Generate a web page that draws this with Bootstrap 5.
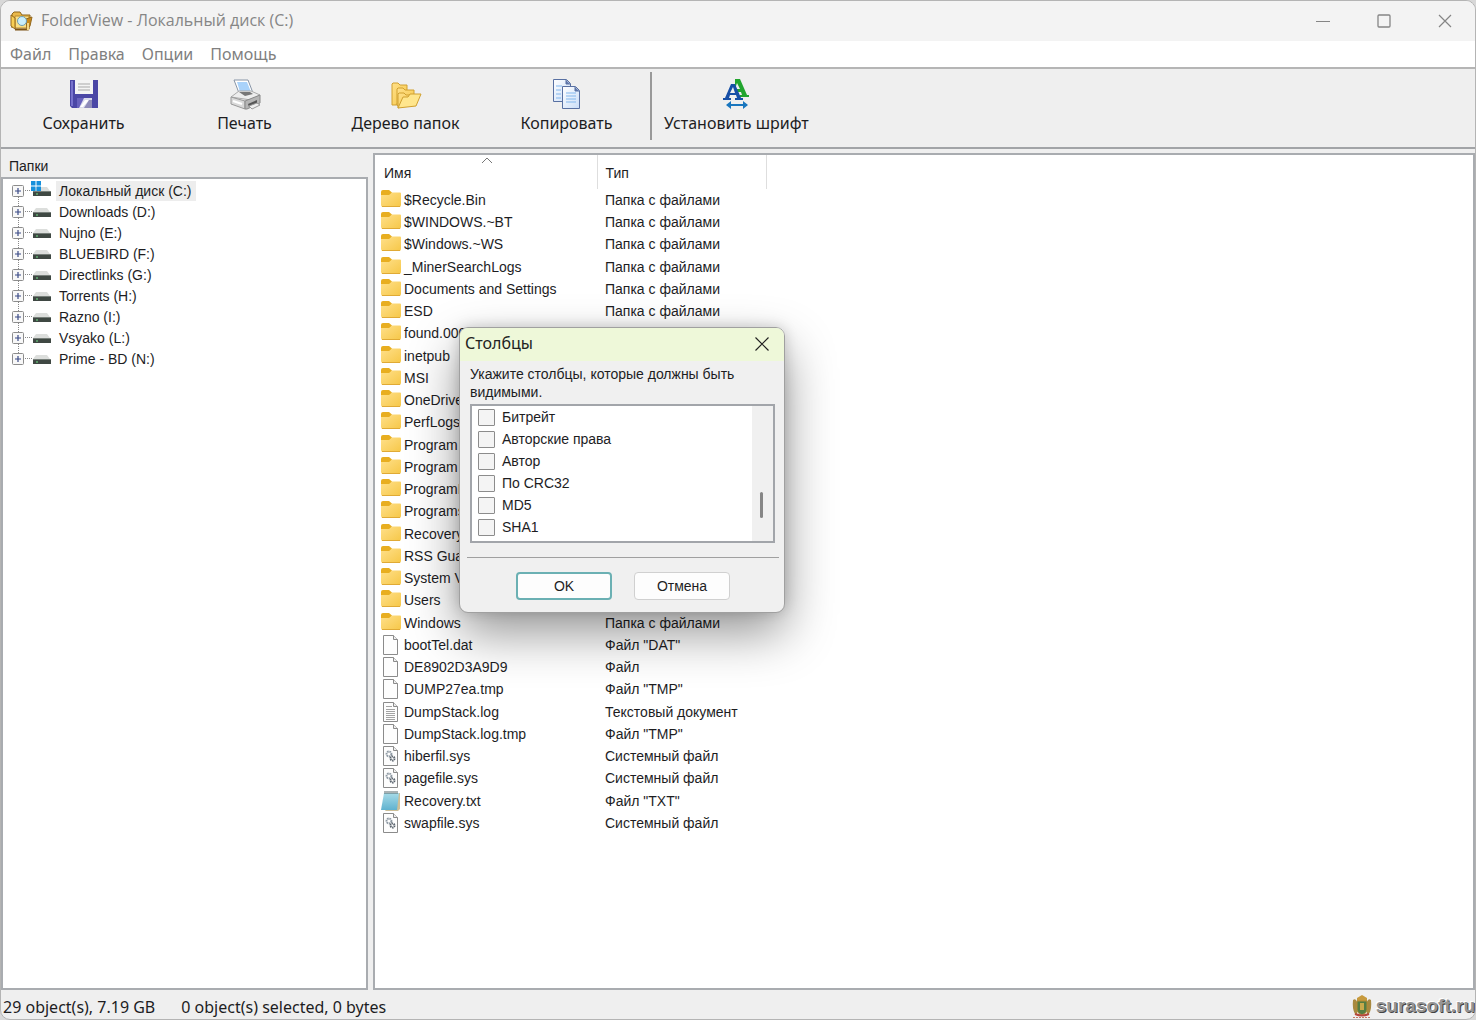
<!DOCTYPE html>
<html lang="ru">
<head>
<meta charset="utf-8">
<meta name="viewport" content="width=device-width, initial-scale=1">
<title>FolderView - Локальный диск (C:)</title>
<link href="https://cdn.jsdelivr.net/npm/bootstrap@5.3.0/dist/css/bootstrap.min.css" rel="stylesheet">
<style>
:root { --face:#efefef; --ui:"Noto Sans","Open Sans",sans-serif; --gdi:"Liberation Sans",sans-serif; }
body { background:#d8d8d8; font-family:var(--ui); color:#1d1d1f; }
button { border:0; background:none; padding:0; color:inherit; }
.app-window { height:100vh; background:var(--face); border:1px solid #b4b4b4; border-radius:10px; }
.title-bar { height:40px; background:#f3f3f3; padding-left:9px; font-size:16px; color:#858585; }
.title-bar h1 { font-family:"Open Sans",sans-serif; font-size:16px; font-weight:400; margin:0; color:#868686; }
.win-btn { width:61px; height:40px; display:flex; align-items:center; justify-content:center; }
.menu-bar { height:28px; background:#fff; border-bottom:2px solid #b5b5b5; padding-left:9px; gap:17px; font-size:16px; line-height:27px; }
.menu-bar a { color:#808080; text-decoration:none; }
.tool-bar { height:80px; border-bottom:2px solid #a2a4a7; padding:3px 2px; }
.tool-btn { width:161px; font-size:16px; line-height:22px; padding-bottom:4px; }
.tool-btn svg { display:block; margin:0 auto 2px; }
.tool-sep { width:2px; height:68px; background:#999; margin-left:3px; }
.tool-wide { width:auto; padding-left:12px; }
.panes { gap:5px; padding-top:4px; font-family:var(--gdi); font-size:14px; }
.left-pane { flex:0 0 25%; max-width:367px; }
.left-pane h2 { font-size:14px; line-height:26px; height:24px; margin:0; padding-left:8px; }
.sunken { background:#fff; border:2px solid #a9acb0; }
.tree { list-style:none; margin:0; padding:1px 0 0 9px; }
.tree li { height:21px; display:flex; align-items:center; position:relative; }
.tree li + li::before { content:""; position:absolute; left:6px; top:-5px; height:10px; border-left:1px dotted #888; }
.expander { width:12px; height:12px; display:flex; }
.twig { width:7px; border-top:1px dotted #888; margin-left:1px; }
.tree .drive { margin-right:4px; }
.tree .tree-name { padding:0 4px 0 3px; line-height:20px; }
.tree .picked { background:#ededed; }
.files { table-layout:fixed; width:100%; border-collapse:collapse; }
.files th { height:34px; font-weight:400; position:relative; border-right:1px solid #dedede; padding:2px 0 0 8px; }
.files th:last-child { border:0; }
.files th:first-child { padding-left:9px; }
.files td { height:22px; line-height:20px; padding:0 0 0 8px; white-space:nowrap; overflow:hidden; }
.files tr:nth-child(4n) td { height:23px; }
.files td:first-child { padding-left:6px; }
.files td svg { display:inline-block; vertical-align:top; margin-right:3px; }
.sort-mark { position:absolute; left:106px; top:2px; }
.status-bar { height:29px; font-size:16px; padding:4px 0 0 2px; gap:26px; }
.brand-mark { font-family:var(--gdi); font-weight:700; font-size:19px; color:#959595; text-shadow:1px 1px 0 #444, -1px -1px 0 #fff; }
.col-dialog { position:absolute; left:459px; top:327px; width:326px; background:#f0f0f0; border:1px solid #a0a0a0; border-radius:9px; overflow:hidden; font-family:var(--gdi); font-size:14px; }
.dialog-shade { position:absolute; left:459px; top:327px; width:326px; height:284px; border-radius:9px; box-shadow:0 22px 50px rgba(0,0,0,.42), 0 0 14px rgba(0,0,0,.18); }
.dialog-title { background:#eef8d9; height:33px; padding:0 14px 2px 5px; }
.dialog-title h2 { font-family:var(--ui); font-size:16px; margin:0; font-weight:400; color:#222; }
.dialog-text { margin:0; padding:4px 8px 3px 10px; line-height:18px; }
.check-box-list { margin:0 9px 0 10px; height:139px; border:2px solid #a2a5aa; }
.check-line { height:22px; display:flex; align-items:center; gap:7px; padding-left:6px; }
.check-line .form-check-input { width:17px; height:17px; margin:0; border:1px solid #8c8c8c; border-radius:1px; background:#f4f4f4; }
.scroll-lane { width:21px; background:#f0f0f0; padding:86px 0 0 8px; }
.scroll-lane i { display:block; width:3px; height:26px; background:#868686; border-radius:2px; }
.dialog-foot { margin:14px 5px 0 7px; border-top:1px solid #a0a0a0; padding:14px 0 12px 49px; gap:22px; }
.dlg-btn { width:96px; height:28px; background:#fdfdfd; border:1px solid #d0d0d0; border-radius:4px; }
.dlg-btn.default-btn { border:2px solid #6bb0b3; }
</style>
<script src="https://cdn.jsdelivr.net/npm/bootstrap@5.3.0/dist/js/bootstrap.bundle.min.js"></script>
</head>
<body class="overflow-hidden">
<svg width="0" height="0" class="position-absolute" aria-hidden="true">
<defs>
<linearGradient id="gFold" x1="0" y1="0" x2="1" y2="1"><stop offset="0" stop-color="#ffe08a"/><stop offset="1" stop-color="#f6c748"/></linearGradient>
<linearGradient id="gPaper" x1="0" y1="0" x2="1" y2="1"><stop offset="0" stop-color="#fff"/><stop offset="1" stop-color="#c9ddf8"/></linearGradient>
<linearGradient id="gNote" x1="0" y1="0" x2="0" y2="1"><stop offset="0" stop-color="#a7dbe8"/><stop offset="1" stop-color="#5fb2cf"/></linearGradient>
<symbol id="folder" viewBox="0 0 20 20"><path d="M0 8V2q0-2 2-2h6l3 2.500-2 3z" fill="#e8ae20"/><path d="M0 5h8l3-2.500h8q1 0 1 1V15q0 2-2 2H2q-2 0-2-2z" fill="url(#gFold)"/><path d="M1 16.500h18" stroke="#e0aa35"/></symbol>
<symbol id="page" viewBox="0 0 20 20"><path d="M2.500.500h10l4 4v15h-14z" fill="#fdfdfd" stroke="#8b8b8b"/><path d="M12.500.500v4h4" fill="#eee" stroke="#8b8b8b"/></symbol>
<symbol id="log" viewBox="0 0 20 20"><use href="#page"/><path d="M5 4.500h6M5 7.500h9M5 9.500h9M5 11.500h9M5 13.500h9M5 15.500h9M5 17.500h9" stroke="#a3a3a3"/></symbol>
<symbol id="gear" viewBox="0 0 20 20"><use href="#page"/><circle cx="8" cy="8" r="2.400" fill="none" stroke="#8e99a3" stroke-width="2" stroke-dasharray="1.500 .6"/><circle cx="11.500" cy="12.500" r="2" fill="none" stroke="#59626c" stroke-width="2" stroke-dasharray="1.300 .6"/></symbol>
<symbol id="note" viewBox="0 0 20 20"><path d="M17 2h2v16l-2 2H4z" fill="#cdbf98"/><path d="M3 2h15l-2 17H0z" fill="url(#gNote)"/><path d="M4 0v3M6 0v3M8 0v3M10 0v3M12 0v3M14 0v3M16 0v3" stroke="#54666b"/></symbol>
<symbol id="plus" viewBox="0 0 12 12"><rect x=".5" y=".5" width="11" height="11" rx="1" fill="#f8f8f8" stroke="#8c8c8c"/><path d="M3 6h6M6 3v6" stroke="#3a4a86" stroke-width="1.200"/></symbol>
<symbol id="drive" viewBox="0 0 20 18"><path d="M4 5h11l3 4H1z" fill="#dcdedc"/><path d="M1 9h18v5H1z" fill="#3f4843"/><path d="M1 9.500h18" stroke="#777f7a"/><path d="M4 12h2" stroke="#72e087"/></symbol>
<symbol id="winflag" viewBox="0 0 10 10"><path d="M0 0h4.500v4.500H0zM5.500 0H10v4.500H5.500zM0 5.500h4.500V10H0zM5.500 5.500H10V10H5.500z" fill="#1590dc"/></symbol>
</defs>
</svg>

<div class="app-window d-flex flex-column overflow-hidden">
<header class="title-bar d-flex align-items-center flex-shrink-0">
<svg width="23" height="22" viewBox="0 0 23 22"><path d="M2 18V4l2-2h6l2 3h8v4" fill="#e9b84a" stroke="#8d6419"/><path d="M5 6h14v12H5z" fill="#fbdf84" stroke="#b98a2c"/><path d="M1 5l4 3v11l-4-3z" fill="#f8cf55" stroke="#94691d"/><path d="M5 19.500h13l1-2" fill="none" stroke="#7c5314" stroke-width="2"/><path d="M16 9l6-2-2 9-3 4z" fill="#c88a1b" stroke="#93681e"/><circle cx="12" cy="11" r="4.500" fill="#c9eefb" stroke="#719eb0"/><path d="M18 13v7" stroke="#f4d783" stroke-width="2"/></svg>
<h1 class="flex-grow-1 ps-2">FolderView - Локальный диск (C:)</h1>
<button class="win-btn" type="button" aria-label="Свернуть"><svg width="14" height="14" viewBox="0 0 14 14"><path d="M0 7.500h14" stroke="#858585"/></svg></button>
<button class="win-btn" type="button" aria-label="Развернуть"><svg width="14" height="14" viewBox="0 0 14 14"><rect x="1" y="1" width="12" height="12" rx="1" fill="none" stroke="#858585" stroke-width="1.300"/></svg></button>
<button class="win-btn" type="button" aria-label="Закрыть"><svg width="14" height="14" viewBox="0 0 14 14"><path d="M1 1l12 12M13 1L1 13" stroke="#858585" stroke-width="1.200"/></svg></button>
</header>
<nav class="menu-bar d-flex flex-shrink-0"><a href="#">Файл</a><a href="#">Правка</a><a href="#">Опции</a><a href="#">Помощь</a></nav>
<div class="tool-bar d-flex flex-shrink-0">
<button class="tool-btn" type="button"><svg width="32" height="32" viewBox="0 0 32 32"><path d="M2 2h28v28H4l-2-2z" fill="#4b47a6"/><path d="M3 3h2v25H3z" fill="#7772cd"/><path d="M7 2h18v14H7z" fill="#f4f4f4"/><path d="M10 6h12M10 9h12M10 12h12" stroke="#a9a9a9"/><path d="M9 20h15v10H9z" fill="#d9daed"/><path d="M9 20h7l-5 10H9z" fill="#6862bd"/><path d="M17 22h4l-6 7h-3z" fill="#fff"/><path d="M21 22h3v8h-8z" fill="#8e8bb9"/></svg>Сохранить</button>
<button class="tool-btn" type="button"><svg width="32" height="32" viewBox="0 0 32 32"><path d="M5 2h14l5 13H10z" fill="#fff" stroke="#8794a6"/><path d="M8 4h10l4 10H11z" fill="#a9d2fa"/><path d="M2 19l8-6h12l9 4-9 5z" fill="#ededed" stroke="#aaa"/><path d="M10 14h11l3 2-8 2z" fill="#777"/><path d="M2 19l14 4v8L2 26z" fill="#d9d9d9" stroke="#999"/><path d="M16 23l15-6v8l-13 6h-2z" fill="#b5b5b5" stroke="#888"/><path d="M19 26l9-4v3l-8 4z" fill="#555"/><path d="M20 28l8-3 3 2-8 4z" fill="#eee" stroke="#999"/><path d="M4 23l9 3" stroke="#fff" stroke-width="2"/></svg>Печать</button>
<button class="tool-btn" type="button"><svg width="32" height="32" viewBox="0 0 32 32" fill="url(#gFold)" stroke="#d0a030"><path d="M2 27V6l1-1h5l2 2h7v5l-11 15z"/><path d="M7 28V11l1-1h5l2 2h9v6z"/><path d="M8 30V16l1-1h5l2 2h9v4z"/><path d="M8 30l5-11h5l2-3h11l-5 12z" fill="#ffe68d"/></svg>Дерево папок</button>
<button class="tool-btn" type="button"><svg width="32" height="32" viewBox="0 0 32 32" fill="url(#gPaper)" stroke="#5870a2"><path d="M2.500 1.500h13l4 4v18h-17z"/><path d="M15 2v4h4" fill="#647db1"/><path d="M5 8h6M5 12h5M5 16h5M5 20h5" stroke="#82b7ed"/><path d="M11.500 8.500h13l4 4v18h-17z"/><path d="M24 9v4h4" fill="#647db1"/><path d="M15 15h10M15 18h10M15 21h10M15 24h10" stroke="#82b7ed"/></svg>Копировать</button>
<div class="tool-sep"></div>
<button class="tool-btn tool-wide" type="button"><svg width="32" height="32" viewBox="0 0 32 32"><path fill-rule="evenodd" d="M15 1h5l7 16h2v2h-9v-2h2l-1-3h-6zM17 5l-2 6h5z" fill="#22a52e"/><path fill-rule="evenodd" d="M11 6h4l6 14h2v2h-8v-2h2l-1-3h-6l-1 3h2v2H3v-2h2zM13 9l-3 6h5z" fill="#164fa6"/><path d="M6 27l5-4v3h12v-3l5 4-5 4v-3H11v3z" fill="#1976be"/></svg>Установить шрифт</button>
</div>

<main class="panes d-flex flex-grow-1 overflow-hidden">
<section class="left-pane d-flex flex-column">
<h2 class="fw-normal">Папки</h2>
<div class="sunken flex-grow-1">
<ul class="tree">
<li><svg class="expander"><use href="#plus"/></svg><span class="twig"></span><svg class="drive" width="20" height="18" overflow="visible"><use href="#drive"/><use href="#winflag" x="-1" y="-1" width="10" height="10"/></svg><span class="tree-name picked">Локальный диск (C:)</span></li>
<li><svg class="expander"><use href="#plus"/></svg><span class="twig"></span><svg class="drive" width="20" height="18"><use href="#drive"/></svg><span class="tree-name">Downloads (D:)</span></li>
<li><svg class="expander"><use href="#plus"/></svg><span class="twig"></span><svg class="drive" width="20" height="18"><use href="#drive"/></svg><span class="tree-name">Nujno (E:)</span></li>
<li><svg class="expander"><use href="#plus"/></svg><span class="twig"></span><svg class="drive" width="20" height="18"><use href="#drive"/></svg><span class="tree-name">BLUEBIRD (F:)</span></li>
<li><svg class="expander"><use href="#plus"/></svg><span class="twig"></span><svg class="drive" width="20" height="18"><use href="#drive"/></svg><span class="tree-name">Directlinks (G:)</span></li>
<li><svg class="expander"><use href="#plus"/></svg><span class="twig"></span><svg class="drive" width="20" height="18"><use href="#drive"/></svg><span class="tree-name">Torrents (H:)</span></li>
<li><svg class="expander"><use href="#plus"/></svg><span class="twig"></span><svg class="drive" width="20" height="18"><use href="#drive"/></svg><span class="tree-name">Razno (I:)</span></li>
<li><svg class="expander"><use href="#plus"/></svg><span class="twig"></span><svg class="drive" width="20" height="18"><use href="#drive"/></svg><span class="tree-name">Vsyako (L:)</span></li>
<li><svg class="expander"><use href="#plus"/></svg><span class="twig"></span><svg class="drive" width="20" height="18"><use href="#drive"/></svg><span class="tree-name">Prime - BD (N:)</span></li>
</ul>
</div>
</section>
<section class="sunken flex-grow-1 overflow-hidden">
<table class="files">
<colgroup><col style="width:222px"><col style="width:169px"><col></colgroup>
<thead><tr><th scope="col">Имя<svg class="sort-mark" width="12" height="7" viewBox="0 0 12 7"><path d="M1 6l5-5 5 5" fill="none" stroke="#777"/></svg></th><th scope="col">Тип</th><th></th></tr></thead>
<tbody>
<tr><td><svg width="20" height="20"><use href="#folder"/></svg>$Recycle.Bin</td><td>Папка с файлами</td></tr>
<tr><td><svg width="20" height="20"><use href="#folder"/></svg>$WINDOWS.~BT</td><td>Папка с файлами</td></tr>
<tr><td><svg width="20" height="20"><use href="#folder"/></svg>$Windows.~WS</td><td>Папка с файлами</td></tr>
<tr><td><svg width="20" height="20"><use href="#folder"/></svg>_MinerSearchLogs</td><td>Папка с файлами</td></tr>
<tr><td><svg width="20" height="20"><use href="#folder"/></svg>Documents and Settings</td><td>Папка с файлами</td></tr>
<tr><td><svg width="20" height="20"><use href="#folder"/></svg>ESD</td><td>Папка с файлами</td></tr>
<tr><td><svg width="20" height="20"><use href="#folder"/></svg>found.000</td><td>Папка с файлами</td></tr>
<tr><td><svg width="20" height="20"><use href="#folder"/></svg>inetpub</td><td></td></tr>
<tr><td><svg width="20" height="20"><use href="#folder"/></svg>MSI</td><td></td></tr>
<tr><td><svg width="20" height="20"><use href="#folder"/></svg>OneDrive</td><td></td></tr>
<tr><td><svg width="20" height="20"><use href="#folder"/></svg>PerfLogs</td><td></td></tr>
<tr><td><svg width="20" height="20"><use href="#folder"/></svg>Program</td><td></td></tr>
<tr><td><svg width="20" height="20"><use href="#folder"/></svg>Program</td><td></td></tr>
<tr><td><svg width="20" height="20"><use href="#folder"/></svg>ProgramD</td><td></td></tr>
<tr><td><svg width="20" height="20"><use href="#folder"/></svg>Programs</td><td></td></tr>
<tr><td><svg width="20" height="20"><use href="#folder"/></svg>Recovery</td><td></td></tr>
<tr><td><svg width="20" height="20"><use href="#folder"/></svg>RSS Gua</td><td></td></tr>
<tr><td><svg width="20" height="20"><use href="#folder"/></svg>System V</td><td></td></tr>
<tr><td><svg width="20" height="20"><use href="#folder"/></svg>Users</td><td></td></tr>
<tr><td><svg width="20" height="20"><use href="#folder"/></svg>Windows</td><td>Папка с файлами</td></tr>
<tr><td><svg width="20" height="20"><use href="#page"/></svg>bootTel.dat</td><td>Файл "DAT"</td></tr>
<tr><td><svg width="20" height="20"><use href="#page"/></svg>DE8902D3A9D9</td><td>Файл</td></tr>
<tr><td><svg width="20" height="20"><use href="#page"/></svg>DUMP27ea.tmp</td><td>Файл "TMP"</td></tr>
<tr><td><svg width="20" height="20"><use href="#log"/></svg>DumpStack.log</td><td>Текстовый документ</td></tr>
<tr><td><svg width="20" height="20"><use href="#page"/></svg>DumpStack.log.tmp</td><td>Файл "TMP"</td></tr>
<tr><td><svg width="20" height="20"><use href="#gear"/></svg>hiberfil.sys</td><td>Системный файл</td></tr>
<tr><td><svg width="20" height="20"><use href="#gear"/></svg>pagefile.sys</td><td>Системный файл</td></tr>
<tr><td><svg width="20" height="20"><use href="#note"/></svg>Recovery.txt</td><td>Файл "TXT"</td></tr>
<tr><td><svg width="20" height="20"><use href="#gear"/></svg>swapfile.sys</td><td>Системный файл</td></tr>
</tbody>
</table>
</section>
</main>

<footer class="status-bar d-flex align-items-center flex-shrink-0">
<span>29 object(s), 7.19 GB</span><span>0 object(s) selected, 0 bytes</span>
<div class="ms-auto d-flex align-items-center gap-1">
<svg width="20" height="24" viewBox="0 0 20 24"><path d="M5 3l5-3 5 3v3H5z" fill="#c79a3d"/><path d="M1 5q3-2 4 2v12H3Q0 14 1 5zM19 5q-3-2-4 2v12h2q3-5 2-14z" fill="#a8893f"/><path d="M5 6h10v9q0 3-5 5-5-2-5-5z" fill="#557d42" stroke="#b28b35"/><path d="M8 8h4v7H8z" fill="#c9aa4b"/><path d="M3 19q7 3 14 0" fill="none" stroke="#b5473c" stroke-width="2"/><path d="M1 22.500h18" stroke="#c77a65" stroke-dasharray="2 1"/></svg>
<span class="brand-mark">surasoft.ru</span></div>
</footer>
</div>

<div class="dialog-shade"></div>
<form class="col-dialog" role="dialog" aria-labelledby="dlgTitle">
<div class="dialog-title d-flex align-items-center justify-content-between"><h2 id="dlgTitle">Столбцы</h2><button type="button" aria-label="Закрыть" class="d-flex"><svg width="16" height="16" viewBox="0 0 16 16"><path d="M1.500 1.500l13 13M14.500 1.500l-13 13" stroke="#222" stroke-width="1.200"/></svg></button></div>
<p class="dialog-text">Укажите столбцы, которые должны быть видимыми.</p>
<div class="check-box-list bg-white d-flex">
<div class="flex-grow-1">
<div class="check-line"><input class="form-check-input" type="checkbox" id="c1"><label for="c1">Битрейт</label></div>
<div class="check-line"><input class="form-check-input" type="checkbox" id="c2"><label for="c2">Авторские права</label></div>
<div class="check-line"><input class="form-check-input" type="checkbox" id="c3"><label for="c3">Автор</label></div>
<div class="check-line"><input class="form-check-input" type="checkbox" id="c4"><label for="c4">По CRC32</label></div>
<div class="check-line"><input class="form-check-input" type="checkbox" id="c5"><label for="c5">MD5</label></div>
<div class="check-line"><input class="form-check-input" type="checkbox" id="c6"><label for="c6">SHA1</label></div>
</div>
<div class="scroll-lane"><i></i></div>
</div>
<div class="dialog-foot d-flex"><button class="dlg-btn default-btn" type="submit">OK</button><button class="dlg-btn" type="button">Отмена</button></div>
</form>
</body>
</html>
